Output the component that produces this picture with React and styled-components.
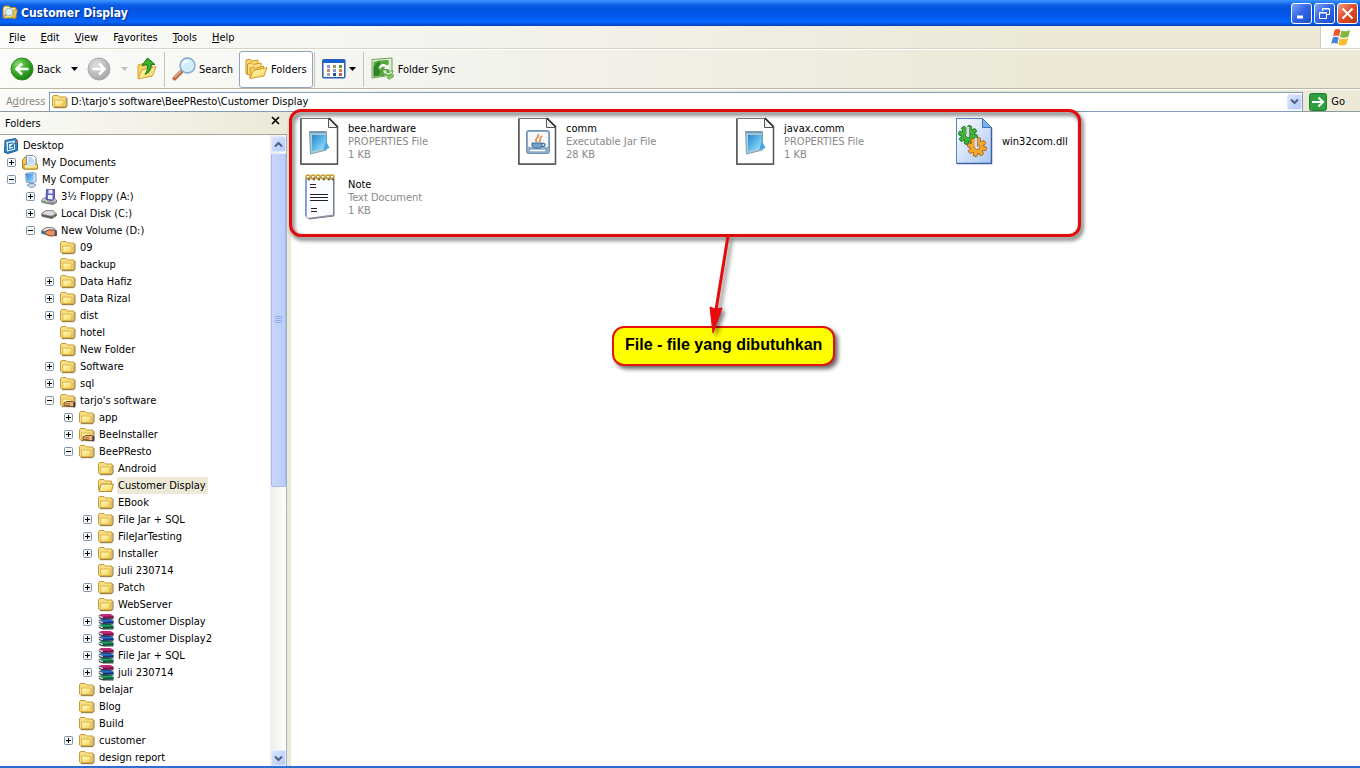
import React from "react";
import styled, { createGlobalStyle, css } from "styled-components";

const UI_FONT = '"DejaVu Sans Condensed", Tahoma, "DejaVu Sans", sans-serif';

const GlobalStyle = createGlobalStyle`
  *, *::before, *::after { box-sizing: border-box; }
  body {
    margin: 0;
    background: #fff;
    color: #000;
    font-family: ${UI_FONT};
    font-size: 11px;
    line-height: 13px;
  }
  button, input { font: inherit; color: inherit; }
  ul { list-style: none; margin: 0; padding: 0; }
  svg { display: block; flex: none; }
`;

/* ---------- layout ---------- */

const Window = styled.div`
  display: flex;
  flex-direction: column;
  min-height: 100vh;
  border-bottom: 2px solid #2b6fd3;
  overflow: hidden;
`;

const TitleBar = styled.header`
  display: flex;
  align-items: center;
  gap: 3px;
  height: 26px;
  padding: 0 2px;
  background: linear-gradient(#3d95ff 0, #2a80f8 2px, #0a5ee6 5px, #0353e0 9px, #0359ee 16px, #0566fc 22px, #0454dc 24px, #0340b4 26px);
`;

const Title = styled.h1`
  flex: 1;
  margin: 0;
  color: #fff;
  font-size: 12px;
  line-height: 16px;
  font-weight: bold;
  text-shadow: 1px 1px 1px #0a2f8c;
`;

const WindowButtons = styled.div`
  display: flex;
  gap: 2px;
`;

const WindowButton = styled.button`
  display: grid;
  place-items: center;
  width: 21px;
  height: 21px;
  padding: 0;
  border: 1px solid #fff;
  border-radius: 3px;
  background: ${(p) =>
    p.$danger
      ? "linear-gradient(135deg, #f0a088, #e0512c 45%, #c03510)"
      : "linear-gradient(135deg, #7da6f5, #3468e6 45%, #1f4fd0)"};
`;

const barSurface = css`
  background: linear-gradient(90deg, #fbfbfa 0, #f3f3ee 35%, #ece9d8 75%);
`;

const MenuBar = styled.nav`
  ${barSurface}
  display: flex;
  align-items: stretch;
  height: 23px;
  padding-left: 1px;
  border-bottom: 1px solid #d8d5c6;
`;

const MenuButton = styled.button`
  padding: 0 8px 0 7px;
  border: 0;
  background: none;

  &:first-child {
    padding-left: 8px;
  }
`;

const Throbber = styled.div`
  display: grid;
  place-items: center;
  width: 40px;
  margin-left: auto;
  border-left: 1px solid #cfccbc;
  background: #fff;
`;

const ToolBar = styled.div`
  ${barSurface}
  display: flex;
  align-items: center;
  height: 40px;
  padding: 0 0 0 4px;
  border-top: 1px solid #fff;
  border-bottom: 1px solid #b9b6a6;
`;

const ToolButton = styled.button`
  display: flex;
  align-items: center;
  gap: 3px;
  height: 37px;
  padding: 0 5px;
  border: 1px solid ${(p) => (p.$pressed ? "#8fa5bb" : "transparent")};
  border-radius: 3px;
  background: ${(p) => (p.$pressed ? "#fff" : "none")};
`;

const DropButton = styled.button`
  display: grid;
  place-items: center;
  width: 14px;
  height: 37px;
  padding: 0;
  border: 0;
  background: none;
  color: ${(p) => (p.$dim ? "#c4c2b8" : "#000")};
`;

const ToolSeparator = styled.span`
  width: 1px;
  height: 35px;
  margin: 0 1px;
  background: #c8c5b4;
`;

const AddressBar = styled.form`
  ${barSurface}
  display: flex;
  align-items: center;
  height: 23px;
  padding: 2px 15px 0 6px;
  border-top: 1px solid #fff;
  border-bottom: 1px solid #8f9a9c;
`;

const AddressLabel = styled.label`
  width: 43px;
  color: #8b8a80;
`;

const AddressField = styled.div`
  display: flex;
  flex: 1;
  align-items: center;
  gap: 3px;
  height: 20px;
  padding-left: 2px;
  border: 1px solid #7f9db9;
  background: #fff;
`;

const AddressInput = styled.input`
  flex: 1;
  min-width: 0;
  height: 18px;
  padding: 0;
  border: 0;
  outline: 0;
  background: none;
`;

const ScrollButton = styled.button`
  display: grid;
  place-items: center;
  width: 15px;
  height: 16px;
  padding: 0;
  border: 1px solid #e4ebfd;
  border-radius: 2px;
  background: linear-gradient(135deg, #dbe5ff, #b7cafa);
`;

const GoButton = styled.button`
  display: flex;
  align-items: center;
  gap: 4px;
  margin-left: 6px;
  padding: 0;
  border: 0;
  background: none;
`;

const Content = styled.div`
  display: flex;
  flex: 1;
`;

const FolderPane = styled.aside`
  display: flex;
  flex-direction: column;
  flex: none;
  width: 291px;
  border-right: 4px solid #ece9d8;
`;

const PaneHeader = styled.div`
  display: flex;
  align-items: center;
  justify-content: space-between;
  height: 23px;
  padding: 1px 5px 0;
  border-bottom: 1px solid #a5a394;
  background: linear-gradient(90deg, #fafaf8, #ece9d8);
`;

const PaneTitle = styled.h2`
  margin: 0;
  font-size: 11px;
  font-weight: normal;
`;

const PaneClose = styled.button`
  display: grid;
  place-items: center;
  width: 13px;
  height: 17px;
  padding: 0 0 6px;
  border: 0;
  background: none;
`;

const PaneBody = styled.div`
  display: flex;
  flex: 1;
  border-right: 1px solid #a3b3c4;
`;

const Tree = styled.ul`
  flex: 1;
  padding-top: 2px;
`;

const TreeRow = styled.li`
  display: flex;
  align-items: center;
  height: 17px;
  padding-left: ${(p) => 3 + Math.max(0, p.$level - 1) * 19}px;
`;

const ExpandSlot = styled.span`
  display: flex;
  align-items: center;
  width: 19px;
  height: 17px;
  padding-left: 4px;
`;

const Expander = styled.button`
  display: block;
  width: 9px;
  height: 9px;
  padding: 0;
  border: 0;
  background: none;
`;

const TreeLabel = styled.a`
  padding: 2px 2px 2px 1px;
  margin-left: 3px;
  color: #000;
  text-decoration: none;
  white-space: nowrap;
  background: ${(p) => (p.$selected ? "#ece9d8" : "none")};
`;

const ScrollBar = styled.div`
  display: flex;
  flex-direction: column;
  align-items: center;
  width: 16px;
  padding-top: 1px;
  background: linear-gradient(90deg, #efeee8, #fdfdfb);
`;

const ScrollTrack = styled.div`
  flex: 1;
  width: 15px;
  padding-top: 1px;
`;

const ScrollThumb = styled.div`
  display: grid;
  place-items: center;
  height: 56%;
  border: 1px solid #a3b9ee;
  border-top-color: #e4ebfd;
  border-radius: 2px;
  background: linear-gradient(90deg, #c9d7fd, #bccdfb);
`;

const FilePane = styled.main`
  position: relative;
  flex: 1;
  min-width: 0;
  padding: 5px 0 0 4px;
  background: #fff;
`;

const FileGrid = styled.ul`
  display: grid;
  grid-template-columns: repeat(4, 218px);
  row-gap: 8px;
`;

const FileTile = styled.li`
  display: flex;
  align-items: center;
  gap: 5px;
  height: 48px;
`;

const FileText = styled.div`
  display: flex;
  flex-direction: column;
  white-space: nowrap;
`;

const FileName = styled.a`
  color: #000;
  text-decoration: none;
`;

const FileMeta = styled.span`
  color: #8a8a8a;
`;

/* ---------- annotation laid over the file pane ---------- */

const Highlight = styled.div`
  position: absolute;
  top: -3px;
  left: -2px;
  width: 792px;
  height: 128px;
  border: 3px solid #e00b0b;
  border-radius: 12px;
  filter: drop-shadow(2px 3px 2px rgba(0, 0, 0, 0.7));
  pointer-events: none;
`;

const Arrow = styled.svg`
  position: absolute;
  top: 122px;
  left: 409px;
  z-index: 2;
  overflow: visible;
  filter: drop-shadow(3px 3px 2px rgba(0, 0, 0, 0.5));
`;

const Callout = styled.p`
  position: absolute;
  top: 214px;
  left: 321px;
  z-index: 1;
  margin: 0;
  padding: 8px 11px 10px;
  border: 2px solid #e0140b;
  border-radius: 12px;
  background: #ff0;
  box-shadow: 3px 3px 4px rgba(0, 0, 0, 0.6);
  font: bold 16px/18px "Liberation Sans", Arial, sans-serif;
  white-space: nowrap;
`;

/* ---------- icons ---------- */

const HiddenDefs = styled.svg`
  position: absolute;
`;

const Gradients = () => (
  <HiddenDefs width="0" height="0" aria-hidden="true">
    <defs>
      <linearGradient id="gold" x1="0" y1="0" x2="1" y2="1">
        <stop offset="0" stopColor="#fffbd0" />
        <stop offset=".5" stopColor="#fbe98c" />
        <stop offset="1" stopColor="#efc551" />
      </linearGradient>
      <radialGradient id="green" cx=".35" cy=".3" r=".8">
        <stop offset="0" stopColor="#8fdd72" />
        <stop offset=".5" stopColor="#38a92a" />
        <stop offset="1" stopColor="#15760f" />
      </radialGradient>
      <radialGradient id="grey" cx=".35" cy=".3" r=".8">
        <stop offset="0" stopColor="#dedede" />
        <stop offset="1" stopColor="#a2a2a2" />
      </radialGradient>
      <linearGradient id="sky" x1="0" y1="0" x2="1" y2="1">
        <stop offset="0" stopColor="#2a86cc" />
        <stop offset=".5" stopColor="#5db9ea" />
        <stop offset="1" stopColor="#b5e3f8" />
      </linearGradient>
      <linearGradient id="screen" x1="0" y1="0" x2="1" y2="1">
        <stop offset="0" stopColor="#2f7fe0" />
        <stop offset="1" stopColor="#8fe0fb" />
      </linearGradient>
      <linearGradient id="dllpage" x1="0" y1="0" x2="1" y2="1">
        <stop offset="0" stopColor="#fff" />
        <stop offset="1" stopColor="#a9c6f5" />
      </linearGradient>
      <linearGradient id="metal" x1="0" y1="0" x2="0" y2="1">
        <stop offset="0" stopColor="#eee" />
        <stop offset="1" stopColor="#777" />
      </linearGradient>
    </defs>
  </HiddenDefs>
);

const Svg = ({ w = 16, h = w, children }) => (
  <svg width={w} height={h} viewBox={`0 0 ${w} ${h}`} aria-hidden="true">
    {children}
  </svg>
);

const FolderShape = () => (
  <>
    <path d="M.5 12V3L1.500 1.500h4.500L7.500 3h6.500v9l-1 1H2z" fill="#f8df84" stroke="#c79c36" />
    <path d="M2.500 6h9l.5.800V12.500H3z" fill="url(#gold)" stroke="#d9ac42" strokeWidth=".9" />
    <path d="M2 13.700h11.800l1.200-1.700V4" fill="none" stroke="#86692a" strokeWidth=".9" />
  </>
);

const FolderIcon = () => (
  <Svg>
    <FolderShape />
  </Svg>
);

const OpenFolderIcon = () => (
  <Svg>
    <path d="M.5 12V3L1.500 1.500h4.500L7.500 3h6v4" fill="#f8df84" stroke="#c79c36" />
    <path d="M3 6h12.400L13.500 13.500H1z" fill="url(#gold)" stroke="#b48a24" />
  </Svg>
);

const SharedHand = () => (
  <>
    <path d="M4 10l3-1.500h5.500L15 10v3.500H9L4 12z" fill="#eeb277" stroke="#6b4320" strokeWidth=".9" />
    <path d="M14.200 9v5.500" stroke="#3c3f56" strokeWidth="1.800" />
    <path d="M6 10.800h4M7 12.300h3" stroke="#8a5226" strokeWidth=".7" />
  </>
);

const SharedFolderIcon = () => (
  <Svg>
    <FolderShape />
    <SharedHand />
  </Svg>
);

const DesktopIcon = () => (
  <Svg>
    <path d="M2 2.500L12.500.5l2 2v10L5 15.500l-3.500-1z" fill="#2f83c2" stroke="#1b5e96" />
    <path d="M3.500 4L12 2.500v9L4 13.500z" fill="#f1f8fc" />
    <path d="M10 4.800l-4.500.8v6l5-1.200V8L8 8.600M7.500 9L14 3" stroke="#2878b8" fill="none" strokeWidth="1.200" />
    <path d="M12.500 3.500l2-1.500 1 1.200-2 1.500z" fill="#d9613a" />
  </Svg>
);

const DocumentsIcon = () => (
  <Svg>
    <path d="M.5 13V5L3 2h4l1 2h6v10H2z" fill="#f1cb52" stroke="#b1851c" />
    <path d="M4.500.5h7l2.500 2.500v9H4.500z" fill="#fff" stroke="#6f91bc" />
    <path d="M6 3h4M6 5h6M6 7h6" stroke="#8cb1df" />
    <path d="M2 9.500h13.500V14H2z" fill="url(#gold)" stroke="#b1851c" />
    <rect x="5" y="7" width="8" height="4" fill="#cfe3f8" />
  </Svg>
);

const ComputerIcon = () => (
  <Svg>
    <path d="M3.500 1.500L11 .5l3 1.300v7.700L11 11l-6.500-.7z" fill="#dbe6f4" stroke="#5f7fb4" strokeWidth=".8" />
    <path d="M4 2.200l7.500-1V10L5 9.400z" fill="url(#screen)" />
    <path d="M7 10.500h4v2H7z" fill="#8fa2bd" />
    <path d="M5 13l3-1.300h4l2 1.300-2.500 2.300H8z" fill="#cdd9e8" stroke="#6d86ab" strokeWidth=".8" />
  </Svg>
);

const FloppyIcon = () => (
  <Svg>
    <path d="M.5 11L3 9h10l2.500 2v2.500L12 15.500 1 13.500z" fill="url(#metal)" stroke="#666" strokeWidth=".8" />
    <path d="M5.500.5h8v9l-2.500 2-6-1z" fill="#6568c8" stroke="#3d3e8f" strokeWidth=".8" />
    <path d="M7.500.7h4v3.800h-4zM7 6h4.500v4.500L7 10z" fill="#f2f2fa" />
    <circle cx="3" cy="12.500" r=".9" fill="#4fc13b" />
  </Svg>
);

const DiskShape = () => (
  <>
    <path d="M.5 7.500L5 4.500l7 .2 3.500 3v2L11 12.500 1 10.500z" fill="url(#metal)" stroke="#666" strokeWidth=".8" />
    <path d="M2 7.500L6 5.400l5 .3 2.500 2L10 9.500z" fill="#dedede" />
    <path d="M1 8.500l9.500 2 4.500-2.500v1.800L11 12 1 10z" fill="#555" />
    <circle cx="12.500" cy="10" r=".9" fill="#4fc13b" />
  </>
);

const DiskIcon = () => (
  <Svg>
    <DiskShape />
  </Svg>
);

const SharedDiskIcon = () => (
  <Svg>
    <DiskShape />
    <path d="M4 8.500L8 7h5l2.500 2v3.500L9 13l-5-2z" fill="#e8925c" stroke="#7a3d17" strokeWidth=".9" />
    <path d="M14.500 7.500V13" stroke="#344b8c" strokeWidth="1.600" />
    <path d="M.5 9.500h3.500" stroke="#2878b8" strokeWidth="2.500" />
  </Svg>
);

const ArchiveBook = ({ y, color, dark }) => (
  <>
    <path d={`M1 ${y + 1}L3.500 ${y}h9L15.500 ${y + 1.800}V${y + 4}L5 ${y + 4.500}z`} fill={color} />
    <path d={`M1 ${y + 1.200}L5 ${y + 2.700}v2L1 ${y + 3.300}z`} fill="#eee" stroke="#444" strokeWidth=".5" />
    <path d={`M5 ${y + 2.700}L15.500 ${y + 2.200}v2.300L5 ${y + 4.800}z`} fill={dark} />
    <path d={`M1 ${y + 3.600}L5 ${y + 5}H15.500`} fill="none" stroke="#111" strokeWidth=".8" />
  </>
);

const ArchiveIcon = () => (
  <Svg>
    <ArchiveBook y={10} color="#23a068" dark="#0a5c38" />
    <ArchiveBook y={5} color="#2a70d0" dark="#0f3684" />
    <ArchiveBook y={0} color="#c42a7c" dark="#7c1048" />
  </Svg>
);

const ExpandGlyph = ({ open }) => (
  <Svg w={9}>
    <rect x=".5" y=".5" width="8" height="8" rx="1" fill="#f7f7f2" stroke="#7d95b0" />
    <path d={open ? "M2 4.500h5" : "M2 4.500h5M4.500 2v5"} stroke="#000" />
  </Svg>
);

const Caret = () => (
  <Svg w={7} h={4}>
    <path d="M0 0h7L3.500 4z" fill="currentColor" />
  </Svg>
);

const Chevron = ({ up }) => (
  <Svg w={9} h={7}>
    <path d={up ? "M1 5.500L4.500 2 8 5.500" : "M1 1.500L4.500 5 8 1.500"} fill="none" stroke="#4d6185" strokeWidth="2" />
  </Svg>
);

const WindowIcon = () => (
  <Svg>
    <path d="M1 13V3l1.500-2H7l1.500 1.500H14V13z" fill="url(#gold)" stroke="#b48a24" />
    <path d="M12 5h3.500L13 13.500h-2z" fill="#f0cd5c" stroke="#b48a24" strokeWidth=".7" />
    <circle cx="7" cy="7" r="3.800" fill="#ddf1fb" stroke="#9db8c8" />
    <path d="M4 9.500L1 12.500" stroke="#a88c74" strokeWidth="1.500" />
  </Svg>
);

const CircleArrow = ({ back }) => (
  <Svg w={24}>
    <circle cx="12" cy="12" r="11" fill={back ? "url(#green)" : "url(#grey)"} stroke={back ? "#2c8a24" : "#aaa"} />
    <path
      d={back ? "M18.500 12H7M12 6.500L6.500 12l5.500 5.500" : "M5.500 12H17M12 6.500l5.500 5.500-5.500 5.500"}
      fill="none"
      stroke="#fff"
      strokeWidth="2.600"
    />
  </Svg>
);

const UpFolderIcon = () => (
  <Svg w={20} h={24}>
    <path d="M1 21V8l5-1.500 2 2 7-1.500v12z" fill="#f3d266" stroke="#d5a83a" />
    <path d="M1 22l4-9 14-3.500-3.500 9.500z" fill="url(#gold)" stroke="#d5a83a" />
    <path d="M10.500 1L18 7.500l-4-.2c.7 5-1.500 8.500-6 10 2.500-3 3-6 2-9.700L5 8.500z" fill="#3cb02c" stroke="#16781a" />
  </Svg>
);

const SearchIcon = () => (
  <Svg w={24}>
    <path d="M9.500 14.500L2.500 21.500" stroke="#b9704a" strokeWidth="4" strokeLinecap="round" />
    <path d="M9 14L2.500 20.500" stroke="#e7b28f" strokeWidth="1.300" />
    <circle cx="15.500" cy="8.500" r="7.500" fill="#d2edfb" stroke="#86a6cf" strokeWidth="1.400" />
    <path d="M11 8c.5-3 2.500-4.500 5.500-4" fill="none" stroke="#fff" strokeWidth="2" />
  </Svg>
);

const FoldersIcon = () => (
  <Svg w={23} h={22}>
    <path d="M1 16V2l4-1 1.500 2L13 2v11z" fill="#f8d66c" stroke="#cf9924" />
    <path d="M2.500 17V6l4-1 2 1.500L16 5v10z" fill="#fbe089" stroke="#cf9924" />
    <path d="M5 20V10l4-1 1.500 1.500L18.500 8v9z" fill="#f5cf5e" stroke="#cf9924" />
    <path d="M5 20.500l3.500-8L22 9.500 19 18z" fill="url(#gold)" stroke="#cf9924" />
  </Svg>
);

const ViewsIcon = () => (
  <Svg w={24} h={20}>
    <rect x=".8" y=".8" width="22" height="18" rx="1" fill="#fff" stroke="#2a5fae" strokeWidth="1.500" />
    <path d="M1 2.500h22" stroke="#1c62cf" strokeWidth="3" />
    {[
      [5, 6, "#8c96c8"], [11, 6, "#b48b60"], [17, 6, "#5a9c48"],
      [5, 10, "#c08a70"], [11, 10, "#8e9ac4"], [17, 10, "#c49234"],
      [5, 14, "#a2a2a2"], [11, 14, "#204e9c"], [17, 14, "#bb604d"],
    ].map(([x, y, c]) => (
      <rect key={`${x}-${y}`} x={x} y={y} width="3" height="3" fill={c} />
    ))}
  </Svg>
);

const SyncIcon = () => (
  <Svg w={24}>
    <path d="M1 2.500l20-1.500v17L1 21z" fill="#e2efd6" stroke="#6ca152" />
    <path d="M2.500 5l6-1.500 9-.5 1 13-6 3-10 .5z" fill="#5aa63e" />
    <path d="M2.500 10l5-6 2 2-3 5 3 4-2 4-5 .5z" fill="#2f8426" />
    <path d="M8 11c.5-4 5-5.500 8-2.500l1.500-1.500.8 5.500-5.500-.8 1.600-1.500c-2-1.500-4-.7-4.600 1.200z" fill="#fff" />
    <path d="M22 14c-.5 4-5 5.500-8 2.500l-1.500 1.500-.8-5.500 5.500.8-1.600 1.500c2 1.500 4 .7 4.600-1.200z" fill="#d8eec6" stroke="#3a8e2e" strokeWidth=".8" />
    <path d="M15 20l8-3v3l-5 3z" fill="#7fc05e" />
  </Svg>
);

const GoIcon = () => (
  <Svg w={18}>
    <rect x=".5" y=".5" width="17" height="17" rx="2" fill="#2f9e3c" stroke="#1f7d2b" />
    <path d="M3 9h11M9.500 4.500L14 9l-4.500 4.500" fill="none" stroke="#fff" strokeWidth="2" />
  </Svg>
);

const WindowsFlag = () => (
  <Svg w={20} h={18}>
    <path d="M3.500 2c2-1.500 4-1.300 6 0L8 8.500c-2-1.300-4-1.300-6 0z" fill="#e8582c" />
    <path d="M10.500 2.500c2 1.300 5 1 8.500-.5l-1.500 6.500c-3 1.500-6 1.700-8.500.5z" fill="#7db93c" />
    <path d="M1.700 9.700c2-1.400 4-1.200 6 0L6.200 16c-2-1.300-4-1.300-6 .2z" fill="#4583d6" />
    <path d="M8.700 10.200c2.500 1.200 5.500 1 8.500-.5l-1.600 6.500c-3 1.500-6 1.600-8.400.3z" fill="#f6be32" />
  </Svg>
);

const PageShape = () => (
  <>
    <path d="M5.500 1.500h29l8 8v38h-37z" fill="#fff" stroke="#7a7a7a" />
    <path d="M6 2v45h36.500V10" fill="none" stroke="#555" strokeWidth="1.500" />
    <path d="M33.500 1.500v9h9z" fill="#f2f2f2" stroke="#555" />
    <path d="M34 1l9 9" stroke="#333" strokeWidth="1.500" />
  </>
);

const PropertiesFileIcon = () => (
  <Svg w={48}>
    <PageShape />
    <path d="M14.500 14.500h17V33l-16 4z" fill="#a9cbd9" stroke="#7fa1b2" />
    <path d="M17 18h14v13.500L17 34z" fill="url(#sky)" />
    <path d="M15 15.500h16" stroke="#6d98ad" strokeWidth="1.500" />
    <path d="M31 24l3.500 7-6.500 2z" fill="#45a6e2" />
  </Svg>
);

const JarFileIcon = () => (
  <Svg w={48}>
    <PageShape />
    <rect x="13.500" y="13.500" width="23" height="23" rx="2" fill="#8fadca" stroke="#6e90b5" />
    <rect x="15" y="15" width="20" height="15" rx="1" fill="#f4f8fb" />
    <path d="M24 25c-4-3 3-4 1-8M26 25c3-2-1-3 3-6" fill="none" stroke="#e8863a" strokeWidth="1.600" />
    <path d="M19 26h10v3c-1 3-9 3-10 0z" fill="#7ba0c6" stroke="#416f9e" />
    <path d="M29 26.500c4-1 4 3 0 3" fill="none" stroke="#416f9e" strokeWidth="1.300" />
    <path d="M17 33.500h15" stroke="#fff" strokeWidth="1.500" />
  </Svg>
);

const TEETH = [0, 45, 90, 135, 180, 225, 270, 315];

const Gear = ({ cx, cy, fill, stroke }) => (
  <g transform={`translate(${cx} ${cy})`}>
    {TEETH.map((a) => (
      <rect key={a} x="-2" y="-9.500" width="4" height="6" rx="1" fill={fill} stroke={stroke} strokeWidth=".8" transform={`rotate(${a + 12})`} />
    ))}
    <circle r="7" fill={fill} stroke={stroke} strokeWidth=".8" />
    {TEETH.map((a) => (
      <rect key={a} x="-1.500" y="-8" width="3" height="4" fill={fill} transform={`rotate(${a + 12})`} />
    ))}
    <circle r="2.500" fill="#e3ecf9" stroke={stroke} strokeWidth=".8" />
  </g>
);

const DllFileIcon = () => (
  <Svg w={48}>
    <path d="M7.500 1.500h26l9 9v36h-35z" fill="url(#dllpage)" stroke="#5b83c4" />
    <path d="M8 46.500h34.500V11" fill="none" stroke="#3c5fa0" strokeWidth="1.500" />
    <path d="M33.500 1.500v9h9z" fill="#7ab2ef" stroke="#4471b5" />
    <Gear cx={19} cy={18} fill="#41b237" stroke="#176e1c" />
    <Gear cx={28} cy={30} fill="#f2a62c" stroke="#9c5a10" />
    <path d="M19 10v9M27 21v9" stroke="#d9dde3" strokeWidth="3" />
    <path d="M20.500 10v9M28.500 21v9" stroke="#747b86" strokeWidth=".8" />
  </Svg>
);

const TextFileIcon = () => (
  <Svg w={48}>
    <path d="M11 5h27.500v37L13 45.500 10.500 43z" fill="#fbfcff" stroke="#7d86b4" />
    <path d="M39 6v37L14 46" fill="none" stroke="#777" />
    <path d="M11 6v37" stroke="#7b91d6" strokeWidth="1.500" />
    {[13, 18, 23, 28, 33, 37].map((x) => (
      <g key={x}>
        <circle cx={x} cy="4" r="2" fill="none" stroke="#c29a2c" strokeWidth="1.400" />
        <circle cx={x + 1} cy="6.500" r="1" fill="#62511f" />
      </g>
    ))}
    <path d="M15 11.500h6M15 14.500h6M15 21.500h18M15 24.500h18M15 27.500h18M16 35.500h6M16 38.500h6" stroke="#222" strokeWidth="1.200" />
  </Svg>
);

/* ---------- data ---------- */

const MENUS = [
  ["", "F", "ile"],
  ["", "E", "dit"],
  ["", "V", "iew"],
  ["F", "a", "vorites"],
  ["", "T", "ools"],
  ["", "H", "elp"],
];

/* level, icon, name, state: "+" collapsed, "-" expanded */
const TREE = [
  [0, DesktopIcon, "Desktop"],
  [1, DocumentsIcon, "My Documents", "+"],
  [1, ComputerIcon, "My Computer", "-"],
  [2, FloppyIcon, "3½ Floppy (A:)", "+"],
  [2, DiskIcon, "Local Disk (C:)", "+"],
  [2, SharedDiskIcon, "New Volume (D:)", "-"],
  [3, FolderIcon, "09"],
  [3, FolderIcon, "backup"],
  [3, FolderIcon, "Data Hafiz", "+"],
  [3, FolderIcon, "Data Rizal", "+"],
  [3, FolderIcon, "dist", "+"],
  [3, FolderIcon, "hotel"],
  [3, FolderIcon, "New Folder"],
  [3, FolderIcon, "Software", "+"],
  [3, FolderIcon, "sql", "+"],
  [3, SharedFolderIcon, "tarjo's software", "-"],
  [4, FolderIcon, "app", "+"],
  [4, SharedFolderIcon, "BeeInstaller", "+"],
  [4, FolderIcon, "BeePResto", "-"],
  [5, FolderIcon, "Android"],
  [5, OpenFolderIcon, "Customer Display", "", true],
  [5, FolderIcon, "EBook"],
  [5, FolderIcon, "File Jar + SQL", "+"],
  [5, FolderIcon, "FileJarTesting", "+"],
  [5, FolderIcon, "Installer", "+"],
  [5, FolderIcon, "juli 230714"],
  [5, FolderIcon, "Patch", "+"],
  [5, FolderIcon, "WebServer"],
  [5, ArchiveIcon, "Customer Display", "+"],
  [5, ArchiveIcon, "Customer Display2", "+"],
  [5, ArchiveIcon, "File Jar + SQL", "+"],
  [5, ArchiveIcon, "juli 230714", "+"],
  [4, FolderIcon, "belajar"],
  [4, FolderIcon, "Blog"],
  [4, FolderIcon, "Build"],
  [4, FolderIcon, "customer", "+"],
  [4, FolderIcon, "design report"],
];

const FILES = [
  [PropertiesFileIcon, "bee.hardware", "PROPERTIES File", "1 KB"],
  [JarFileIcon, "comm", "Executable Jar File", "28 KB"],
  [PropertiesFileIcon, "javax.comm", "PROPERTIES File", "1 KB"],
  [DllFileIcon, "win32com.dll"],
  [TextFileIcon, "Note", "Text Document", "1 KB"],
];

/* ---------- page ---------- */

export default function App() {
  return (
    <>
      <GlobalStyle />
      <Gradients />
      <Window>
        <TitleBar>
          <WindowIcon />
          <Title>Customer Display</Title>
          <WindowButtons>
            <WindowButton aria-label="Minimize">
              <Svg w={13}>
                <path d="M2 10h6" stroke="#fff" strokeWidth="3" />
              </Svg>
            </WindowButton>
            <WindowButton aria-label="Restore">
              <Svg w={13}>
                <path d="M4.500 4V1.500h7v6H9M4.500 2h7M1.500 5.500h7v6h-7zM1.500 6h7" fill="none" stroke="#fff" />
              </Svg>
            </WindowButton>
            <WindowButton $danger aria-label="Close">
              <Svg w={13}>
                <path d="M1.500 1.500l10 10M11.500 1.500l-10 10" stroke="#fff" strokeWidth="2" />
              </Svg>
            </WindowButton>
          </WindowButtons>
        </TitleBar>

        <MenuBar>
          {MENUS.map(([before, key, after]) => (
            <MenuButton key={before + key + after}>
              {before}
              <u>{key}</u>
              {after}
            </MenuButton>
          ))}
          <Throbber>
            <WindowsFlag />
          </Throbber>
        </MenuBar>

        <ToolBar>
          <ToolButton>
            <CircleArrow back />
            Back
          </ToolButton>
          <DropButton aria-label="Back history">
            <Caret />
          </DropButton>
          <ToolButton aria-label="Forward">
            <CircleArrow />
          </ToolButton>
          <DropButton $dim aria-label="Forward history">
            <Caret />
          </DropButton>
          <ToolButton aria-label="Up">
            <UpFolderIcon />
          </ToolButton>
          <ToolSeparator />
          <ToolButton>
            <SearchIcon />
            Search
          </ToolButton>
          <ToolButton $pressed aria-pressed="true">
            <FoldersIcon />
            Folders
          </ToolButton>
          <ToolSeparator />
          <ToolButton aria-label="Views">
            <ViewsIcon />
            <Caret />
          </ToolButton>
          <ToolSeparator />
          <ToolButton>
            <SyncIcon />
            Folder Sync
          </ToolButton>
        </ToolBar>

        <AddressBar onSubmit={(e) => e.preventDefault()}>
          <AddressLabel htmlFor="address">
            A<u>d</u>dress
          </AddressLabel>
          <AddressField>
            <FolderIcon />
            <AddressInput id="address" defaultValue="D:\tarjo's software\BeePResto\Customer Display" />
            <ScrollButton type="button" aria-label="Show addresses">
              <Chevron />
            </ScrollButton>
          </AddressField>
          <GoButton>
            <GoIcon />
            Go
          </GoButton>
        </AddressBar>

        <Content>
          <FolderPane>
            <PaneHeader>
              <PaneTitle>Folders</PaneTitle>
              <PaneClose aria-label="Close folders">
                <Svg w={9}>
                  <path d="M1 1l7 7M8 1L1 8" stroke="#000" strokeWidth="1.600" />
                </Svg>
              </PaneClose>
            </PaneHeader>
            <PaneBody>
              <Tree>
                {TREE.map(([level, Icon, name, state, selected], i) => (
                  <TreeRow key={i} $level={level}>
                    {level > 0 && (
                      <ExpandSlot>
                        {state && (
                          <Expander aria-label={state === "-" ? "Collapse" : "Expand"}>
                            <ExpandGlyph open={state === "-"} />
                          </Expander>
                        )}
                      </ExpandSlot>
                    )}
                    <Icon />
                    <TreeLabel href="#" $selected={selected}>
                      {name}
                    </TreeLabel>
                  </TreeRow>
                ))}
              </Tree>
              <ScrollBar>
                <ScrollButton aria-label="Scroll up">
                  <Chevron up />
                </ScrollButton>
                <ScrollTrack>
                  <ScrollThumb>
                    <Svg w={7} h={8}>
                      <path d="M0 .5h7M0 2.500h7M0 4.500h7M0 6.500h7" stroke="#8fabef" />
                    </Svg>
                  </ScrollThumb>
                </ScrollTrack>
                <ScrollButton aria-label="Scroll down">
                  <Chevron />
                </ScrollButton>
              </ScrollBar>
            </PaneBody>
          </FolderPane>

          <FilePane>
            <FileGrid>
              {FILES.map(([Icon, name, kind, size]) => (
                <FileTile key={name}>
                  <Icon />
                  <FileText>
                    <FileName href="#">{name}</FileName>
                    {kind && <FileMeta>{kind}</FileMeta>}
                    {size && <FileMeta>{size}</FileMeta>}
                  </FileText>
                </FileTile>
              ))}
            </FileGrid>
            <Highlight />
            <Arrow width="40" height="100" viewBox="0 0 40 100" aria-hidden="true">
              <path d="M28 2L16 76" stroke="#e80b0b" strokeWidth="3" />
              <path d="M10 73l5 2 7-1-9 25z" fill="#e80b0b" stroke="#e80b0b" />
            </Arrow>
            <Callout>File - file yang dibutuhkan</Callout>
          </FilePane>
        </Content>
      </Window>
    </>
  );
}
